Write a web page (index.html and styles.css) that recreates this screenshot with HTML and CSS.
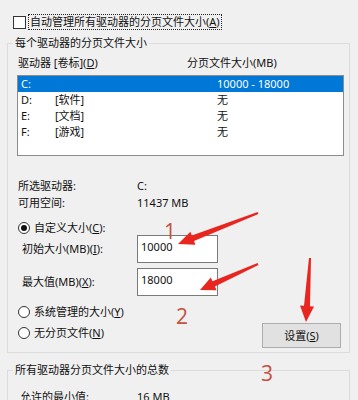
FILE: index.html
```html
<!DOCTYPE html>
<html lang="zh-CN">
<head>
<meta charset="utf-8">
<title>虚拟内存</title>
<link rel="stylesheet" href="styles.css">
</head>
<body>
<div class="page">
  <div class="auto-row">
    <span class="checkbox"></span>
    <span class="focus-label">自动管理所有驱动器的分页文件大小(<u>A</u>)</span>
  </div>

  <fieldset class="group group-drives">
    <legend>每个驱动器的分页文件大小</legend>
    <div class="list-head">
      <span>驱动器 [卷标](<u>D</u>)</span>
      <span>分页文件大小(MB)</span>
    </div>
    <div class="listbox">
      <div class="lrow selected"><span>C:</span><span></span><span>10000 - 18000</span></div>
      <div class="lrow"><span>D:</span><span>[软件]</span><span>无</span></div>
      <div class="lrow"><span>E:</span><span>[文档]</span><span>无</span></div>
      <div class="lrow"><span>F:</span><span>[游戏]</span><span>无</span></div>
    </div>

    <div class="info">
      <div class="info-row"><span>所选驱动器:</span><span>C:</span></div>
      <div class="info-row"><span>可用空间:</span><span>11437 MB</span></div>
    </div>

    <div class="radio-row radio-custom">
      <span class="radio checked"></span>
      <span>自定义大小(<u>C</u>):</span>
    </div>
    <div class="field-row">
      <span class="field-label">初始大小(MB)(<u>I</u>):</span>
      <span class="field-input">10000</span>
    </div>
    <div class="field-row field-row-2">
      <span class="field-label">最大值(MB)(<u>X</u>):</span>
      <span class="field-input">18000</span>
    </div>
    <div class="radio-row radio-system">
      <span class="radio"></span>
      <span>系统管理的大小(<u>Y</u>)</span>
    </div>
    <div class="last-row">
      <div class="radio-row radio-none">
        <span class="radio"></span>
        <span>无分页文件(<u>N</u>)</span>
      </div>
      <button class="btn">设置(<u>S</u>)</button>
    </div>
  </fieldset>

  <fieldset class="group group-total">
    <legend>所有驱动器分页文件大小的总数</legend>
    <div class="info-row"><span>允许的最小值:</span><span>16 MB</span></div>
  </fieldset>

  <svg class="annot" width="358" height="400" viewBox="0 0 358 400" aria-hidden="true">
    <polygon points="258.4,213.9 194.0,241.0 195.4,244.7 178,244 190.4,231.7 191.8,235.4 257.6,212.1" />
    <polygon points="258.4,264.9 214.9,286.6 216.6,290.3 200,290 210.8,277.5 212.5,281.2 257.6,263.1" />
    <polygon points="311.0,258.1 310.0,306.2 314.0,306.4 306,322 300.0,305.6 304.0,305.8 309.0,257.9" />
  </svg>
  <span class="num num-1">1</span>
  <span class="num num-2">2</span>
  <span class="num num-3">3</span>
</div>
</body>
</html>
```

FILE: styles.css
```css
html, body {
  margin: 0;
  padding: 0;
  overflow: hidden;
  background: #f0f0f0;
}

.page {
  position: relative;
  width: 358px;
  height: 400px;
  overflow: hidden;
  padding-top: 14px;
  box-sizing: border-box;
  font-family: "Noto Sans", "Noto Sans CJK SC", sans-serif;
  font-size: 11px;
  line-height: 14px;
  color: #111;
}

u {
  text-decoration: underline;
  text-underline-offset: 1px;
}

/* top checkbox */
.auto-row {
  display: flex;
  align-items: center;
  height: 16px;
  padding-left: 13px;
  gap: 2px;
}
.checkbox {
  width: 11px;
  height: 11px;
  border: 1px solid #333;
  background: #fff;
}
.focus-label {
  border: 1px dotted #222;
  padding: 0 1px;
  line-height: 14px;
}

/* group boxes */
.group {
  margin: 6px 0 0 7px;
  width: 343px;
  box-sizing: border-box;
  border: 1px solid #dcdcdc;
  padding: 6px 5px 4px 9px;
  min-width: 0;
}
.group legend {
  padding: 0 2px;
  margin-left: -4px;
  line-height: 14px;
}
.group-total {
  margin-top: 10px;
  padding-top: 13px;
}

/* list header */
.list-head {
  display: grid;
  grid-template-columns: 169px 1fr;
  padding-left: 1px;
}

/* listbox */
.listbox {
  margin-top: 5px;
  height: 81px;
  box-sizing: border-box;
  border: 1px solid #8c8c8c;
  background: #fff;
}
.lrow {
  display: grid;
  grid-template-columns: 34px 162px 1fr;
  height: 16px;
  line-height: 16px;
  padding-left: 3px;
}
.lrow.selected {
  background: #0078d7;
  color: #fff;
}

/* info rows */
.info {
  margin-top: 23px;
  display: flex;
  flex-direction: column;
  gap: 3px;
}
.info-row {
  display: grid;
  grid-template-columns: 119px 1fr;
  padding-left: 1px;
}
.group-total .info-row {
  padding-left: 3px;
  grid-template-columns: 117px 1fr;
}

/* radios */
.radio-row {
  display: flex;
  align-items: center;
  gap: 4px;
  padding-left: 1px;
}
.radio {
  width: 10px;
  height: 10px;
  border: 1px solid #333;
  border-radius: 50%;
  background: #fff;
  display: flex;
  align-items: center;
  justify-content: center;
}
.radio.checked::after {
  content: "";
  width: 6px;
  height: 6px;
  border-radius: 50%;
  background: #111;
}
.radio-custom {
  margin-top: 11px;
}
.radio-system {
  margin-top: 9px;
}

/* fields */
.field-row {
  display: flex;
  align-items: center;
  padding-left: 5px;
}
.field-row-2 {
  margin-top: 5px;
}
.field-label {
  width: 115px;
}
.field-input {
  width: 81px;
  height: 28px;
  box-sizing: border-box;
  border: 1px solid #7a7a7a;
  background: #fff;
  padding: 4px 3px 0;
  color: #111;
}

/* last row */
.last-row {
  display: flex;
  justify-content: space-between;
  align-items: flex-start;
  margin-top: 4px;
}
.radio-none {
  margin-top: 3px;
}
.btn {
  width: 79px;
  height: 25px;
  margin-right: 3px;
  border: 1px solid #adadad;
  background: #e1e1e1;
  font: inherit;
  color: #111;
  padding: 0;
}

/* annotations */
.annot {
  position: absolute;
  left: 0;
  top: 0;
  fill: #e8251f;
  pointer-events: none;
}
.num {
  position: absolute;
  font-family: "Open Sans", "Liberation Sans", sans-serif;
  font-size: 21px;
  line-height: 21px;
  color: #c4503f;
}
.num-1 { left: 164px; top: 221px; }
.num-2 { left: 176px; top: 306px; }
.num-3 { left: 261px; top: 363px; }
```
